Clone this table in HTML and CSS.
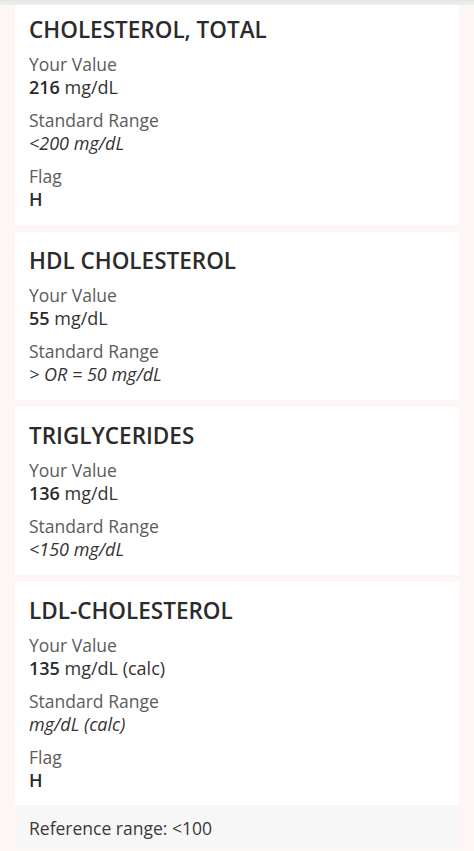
FILE: index.html
```html
<!DOCTYPE html>
<html lang="en">
<head>
<meta charset="utf-8">
<title>Lipid Panel</title>
<link rel="stylesheet" href="styles.css">
</head>
<body>
<div class="topbar"></div>
<main class="list">
  <section class="card card-first">
    <h2 class="title">CHOLESTEROL, TOTAL</h2>
    <div class="field">
      <div class="label">Your Value</div>
      <div class="value"><b>216</b> mg/dL</div>
    </div>
    <div class="field">
      <div class="label">Standard Range</div>
      <div class="value range">&lt;200 mg/dL</div>
    </div>
    <div class="field">
      <div class="label">Flag</div>
      <div class="value"><b>H</b></div>
    </div>
  </section>
  <section class="card">
    <h2 class="title">HDL CHOLESTEROL</h2>
    <div class="field">
      <div class="label">Your Value</div>
      <div class="value"><b>55</b> mg/dL</div>
    </div>
    <div class="field">
      <div class="label">Standard Range</div>
      <div class="value range">&gt; OR = 50 mg/dL</div>
    </div>
  </section>
  <section class="card">
    <h2 class="title">TRIGLYCERIDES</h2>
    <div class="field">
      <div class="label">Your Value</div>
      <div class="value"><b>136</b> mg/dL</div>
    </div>
    <div class="field">
      <div class="label">Standard Range</div>
      <div class="value range">&lt;150 mg/dL</div>
    </div>
  </section>
  <section class="card card-last">
    <h2 class="title">LDL-CHOLESTEROL</h2>
    <div class="field">
      <div class="label">Your Value</div>
      <div class="value"><b>135</b> mg/dL (calc)</div>
    </div>
    <div class="field">
      <div class="label">Standard Range</div>
      <div class="value range">mg/dL (calc)</div>
    </div>
    <div class="field">
      <div class="label">Flag</div>
      <div class="value"><b>H</b></div>
    </div>
  </section>
  <div class="note">Reference range: &lt;100</div>
</main>
</body>
</html>
```

FILE: styles.css
```css
* { box-sizing: border-box; }
html, body {
  margin: 0;
  padding: 0;
}
body {
  background: #fcf7f5;
  font-family: "Open Sans", "Noto Sans", sans-serif;
  color: #333;
  height: 851px;
  overflow: hidden;
}
.topbar {
  height: 5px;
  background: linear-gradient(#e6e6e6, #f0efef);
}
.list {
  padding: 0 15px;
  display: flex;
  flex-direction: column;
  gap: 7px;
}
.card {
  background: #fff;
  padding: 15px 14px 14px;
  display: flex;
  flex-direction: column;
  gap: 10px;
}
.card-first { padding-top: 11px; }
.card-last { padding-bottom: 13px; }
.title {
  margin: 0 0 -1px;
  font-size: 22.5px;
  line-height: 28px;
  font-weight: 600;
  color: #2b2b2b;
}
.field {
  display: flex;
  flex-direction: column;
}
.label {
  font-size: 17.5px;
  line-height: 23px;
  color: #5b5b5b;
}
.value {
  font-size: 18px;
  line-height: 23px;
  color: #333;
}
.value b { font-weight: 600; color: #2b2b2b; }
.range { font-style: italic; }
.note {
  margin-top: -7px;
  background: #f7f7f7;
  padding: 12px 14px 10px;
  font-size: 17.5px;
  line-height: 23px;
  color: #3a3a3a;
}
```
